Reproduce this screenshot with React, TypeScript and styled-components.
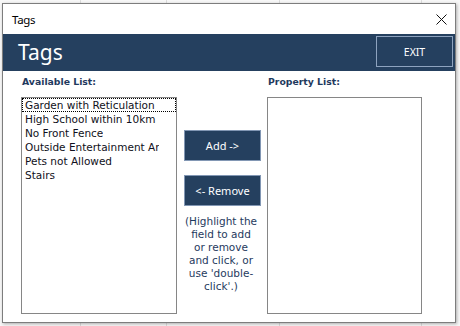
import React from 'react';
import styled, { createGlobalStyle } from 'styled-components';

const NAVY = '#25405f';

const GlobalStyle = createGlobalStyle`
	html, body {
		margin: 0;
		padding: 0;
	}
	body {
		width: 460px;
		height: 326px;
		overflow: hidden;
		background-color: #f7f7f7;
		background-image:
			linear-gradient(#dcdcdc, #dcdcdc),
			linear-gradient(#dcdcdc, #dcdcdc),
			linear-gradient(#dcdcdc, #dcdcdc),
			linear-gradient(#dcdcdc, #dcdcdc);
		background-size: 1px 100%;
		background-repeat: no-repeat;
		background-position: 80px 0, 166px 0, 279px 0, 421px 0;
		font-family: 'DejaVu Sans', Tahoma, sans-serif;
	}
`;

const Window = styled.div`
	margin: 3px 0 0 2px;
	width: 452px;
	height: 318px;
	border: 1px solid #7d7d7d;
	background: #fff;
	box-shadow: 1px 1px 3px rgba(0, 0, 0, 0.3);
	display: flex;
	flex-direction: column;
`;

const TitleBar = styled.div`
	height: 30px;
	display: flex;
	align-items: center;
	justify-content: space-between;
	padding: 0 8px 0 9px;
`;

const TitleText = styled.span`
	font-family: 'Noto Sans', sans-serif;
	font-size: 11.5px;
	letter-spacing: -0.3px;
	color: #000;
`;

const CloseIcon = styled.svg`
	width: 11px;
	height: 11px;
	display: block;
`;

const Banner = styled.div`
	height: 37px;
	background: ${NAVY};
	display: flex;
	justify-content: space-between;
	align-items: flex-start;
	padding: 2px 2px 0 15px;
	box-sizing: border-box;
`;

const BannerTitle = styled.h1`
	margin: 0;
	align-self: center;
	font-family: 'Noto Sans', sans-serif;
	font-weight: 400;
	font-size: 21px;
	line-height: 33px;
	color: #fff;
	margin-top: -2px;
`;

const ExitButton = styled.button`
	width: 77px;
	height: 31px;
	box-sizing: border-box;
	border: 1px solid #8ea3bf;
	background: ${NAVY};
	color: #fff;
	font-family: 'Noto Sans', sans-serif;
	font-size: 10.5px;
	padding: 0;
	cursor: pointer;
`;

const Body = styled.div`
	flex: 1;
	display: flex;
	align-items: flex-start;
	padding: 0 0 0 18px;
`;

const Column = styled.div`
	display: flex;
	flex-direction: column;
`;

const Label = styled.div`
	font-family: 'DejaVu Sans', Tahoma, sans-serif;
	font-weight: 700;
	font-size: 9.3px;
	color: #1f3a5e;
	height: 26px;
	padding: 5px 0 0 1px;
	box-sizing: border-box;
`;

const ListBox = styled.div<{ $width: number }>`
	width: ${(p) => p.$width}px;
	height: 217px;
	box-sizing: border-box;
	border: 1px solid #868686;
	background: #fff;
	display: flex;
	flex-direction: column;
`;

const Item = styled.div<{ $focused?: boolean }>`
	height: 14px;
	line-height: 14px;
	padding-left: 3px;
	font-size: 10.5px;
	color: #101020;
	white-space: nowrap;
	outline: ${(p) => (p.$focused ? '1px dotted #000' : 'none')};
	outline-offset: -1px;
`;

// the list clips its text short of the right edge, as the form control does
const ItemText = styled.span`
	display: inline-block;
	max-width: 134px;
	overflow: hidden;
	vertical-align: top;
`;

const Middle = styled.div`
	width: 77px;
	margin: 0 6px 0 7px;
	padding-top: 59px;
	display: flex;
	flex-direction: column;
	gap: 14px;
`;

const ActionButton = styled.button`
	width: 77px;
	height: 31px;
	box-sizing: border-box;
	border: 1px solid #8297b4;
	background: ${NAVY};
	color: #fff;
	font-family: 'Noto Sans', sans-serif;
	font-size: 11px;
	padding: 0;
	cursor: pointer;
`;

const Hint = styled.p`
	margin: -5px 0 0 0;
	padding-right: 3px;
	text-align: center;
	font-size: 10.5px;
	line-height: 13px;
	color: #1f3a5e;
`;

const available = [
	'Garden with Reticulation',
	'High School within 10km',
	'No Front Fence',
	'Outside Entertainment Area',
	'Pets not Allowed',
	'Stairs',
];

export default function App() {
	return (
		<>
			<GlobalStyle />
			<Window>
				<TitleBar>
					<TitleText>Tags</TitleText>
					<CloseIcon viewBox="0 0 11 11">
						<path d="M0.5 0.5 L10.5 10.5 M10.5 0.5 L0.5 10.5" stroke="#111" strokeWidth="1" fill="none" />
					</CloseIcon>
				</TitleBar>
				<Banner>
					<BannerTitle>Tags</BannerTitle>
					<ExitButton>EXIT</ExitButton>
				</Banner>
				<Body>
					<Column>
						<Label>Available List:</Label>
						<ListBox $width={156}>
							{available.map((name, i) => (
								<Item key={name} $focused={i === 0}>
									<ItemText>{name}</ItemText>
								</Item>
							))}
						</ListBox>
					</Column>
					<Middle>
						<ActionButton>Add -&gt;</ActionButton>
						<ActionButton>&lt;- Remove</ActionButton>
						<Hint>
							(Highlight the
							<br />
							field to add
							<br />
							or remove
							<br />
							and click, or
							<br />
							use 'double-
							<br />
							click'.)
						</Hint>
					</Middle>
					<Column>
						<Label>Property List:</Label>
						<ListBox $width={155} />
					</Column>
				</Body>
			</Window>
		</>
	);
}
